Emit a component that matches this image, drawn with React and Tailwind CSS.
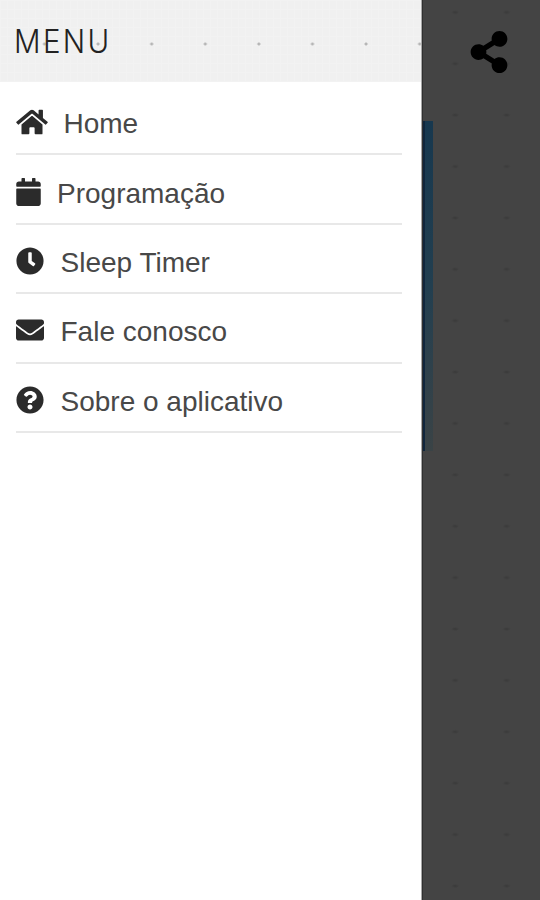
import {
  FaHome,
  FaCalendar,
  FaClock,
  FaEnvelope,
  FaQuestionCircle,
  FaShareAlt,
} from "react-icons/fa";

const items = [
  { label: "Home", icon: FaHome, iconClass: "w-[32px] mr-[15.5px]" },
  { label: "Programação", icon: FaCalendar, iconClass: "w-[25px] mr-[16px]" },
  { label: "Sleep Timer", icon: FaClock, iconClass: "w-[28px] mr-[16.5px]" },
  { label: "Fale conosco", icon: FaEnvelope, iconClass: "w-[28px] mr-[16.5px]" },
  { label: "Sobre o aplicativo", icon: FaQuestionCircle, iconClass: "w-[28px] mr-[16.5px]" },
];

function MenuItem({ label, icon: Icon, iconClass }) {
  return (
    <li className="flex h-[69.4px] items-center border-b-2 border-[#e8e8e8] pt-[9px]">
      <Icon className={`h-[28px] shrink-0 -translate-y-[2px] text-[#2b2b2b] ${iconClass}`} />
      <span className="whitespace-nowrap">{label}</span>
    </li>
  );
}

export default function App() {
  return (
    <div className="flex h-[900px] w-[540px] overflow-hidden bg-[#444444] font-['Liberation_Sans',Arial,sans-serif]">
      <aside className="w-[422px] shrink-0 border-r border-[#a8a8a8] bg-white">
        <header className="h-[82px] bg-[#f0f0f0] bg-[repeating-linear-gradient(90deg,#f2f2f2_0_1px,transparent_1px_7px),repeating-linear-gradient(0deg,#f2f2f2_0_1px,transparent_1px_9px)]">
          <div className="flex h-full items-center bg-[radial-gradient(circle,#b5b5b5_1px,transparent_2px)] bg-[length:53.6px_82px] bg-[position:17.7px_3px] pt-[2px] pl-[14px]">
            <h1 className="origin-left scale-x-[0.92] font-['Inter',sans-serif] text-[32px] leading-none font-light tracking-[2.6px] text-[#222]">
              MENU
            </h1>
          </div>
        </header>
        <ul className="mr-[19px] ml-[16px] pt-[4px] text-[28px] leading-none text-[#484848]">
          {items.map((item) => (
            <MenuItem key={item.label} {...item} />
          ))}
        </ul>
      </aside>
      <main className="flex-1 border-l border-[#303030] bg-[radial-gradient(ellipse_4px_2px,#3b3b3b_20%,transparent)] bg-[length:51.4px_51.4px] bg-[position:6.5px_-13.4px]">
        <div className="flex h-[121px] pt-[31px] pl-[45px]">
          <FaShareAlt className="h-[42px] w-[42px] text-black" />
        </div>
        <div className="h-[330px] w-[10px] border-l-2 border-[#10263d] bg-linear-to-b from-[#17384f] via-[#223f50] to-[#3a4346]" />
      </main>
    </div>
  );
}
